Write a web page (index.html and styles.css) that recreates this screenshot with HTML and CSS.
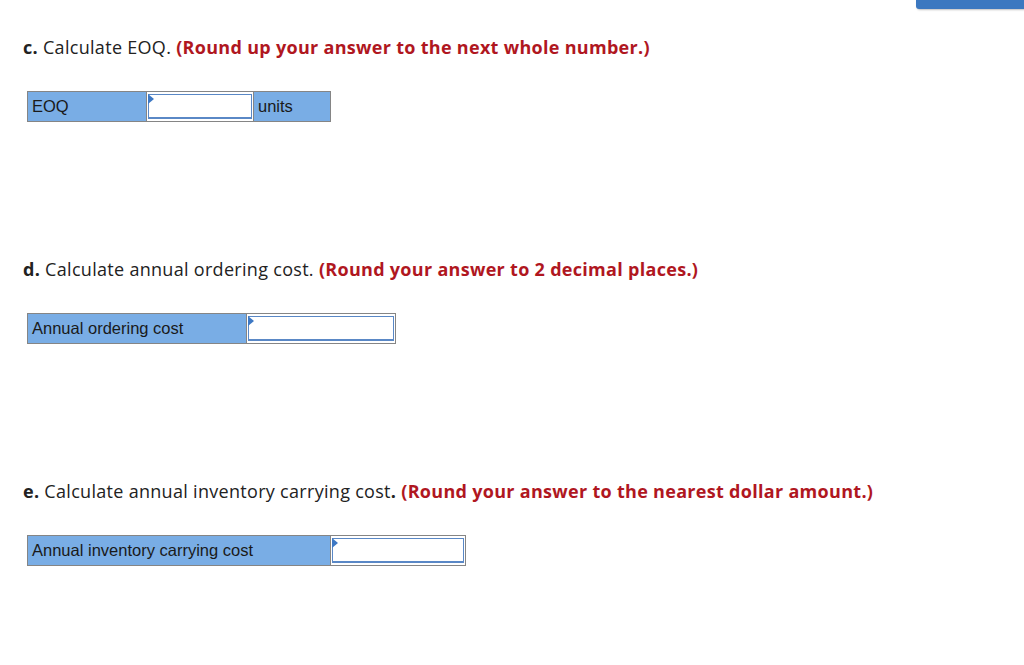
FILE: index.html
```html
<!DOCTYPE html>
<html>
<head>
<meta charset="utf-8">
<link rel="stylesheet" href="styles.css">
</head>
<body>
<div class="topbar"></div>
<main class="page">
  <section class="part">
    <p class="q"><b>c.</b> Calculate EOQ. <span class="hint">(Round up your answer to the next whole number.)</span></p>
    <table class="grid">
      <tr>
        <td class="lbl w119">EOQ</td>
        <td class="inp w104"><div class="box"></div></td>
        <td class="lbl w77">units</td>
      </tr>
    </table>
  </section>
  <section class="part">
    <p class="q"><b>d.</b> Calculate annual ordering cost. <span class="hint">(Round your answer to 2 decimal places.)</span></p>
    <table class="grid">
      <tr>
        <td class="lbl w219">Annual ordering cost</td>
        <td class="inp w146"><div class="box"></div></td>
      </tr>
    </table>
  </section>
  <section class="part">
    <p class="q"><b>e.</b> Calculate annual inventory carrying cost<b>.</b> <span class="hint">(Round your answer to the nearest dollar amount.)</span></p>
    <table class="grid">
      <tr>
        <td class="lbl w303">Annual inventory carrying cost</td>
        <td class="inp w132"><div class="box"></div></td>
      </tr>
    </table>
  </section>
</main>
</body>
</html>
```

FILE: styles.css
```css
html, body {
  margin: 0;
  padding: 0;
  background: #fff;
}
.topbar {
  position: absolute;
  top: 0;
  right: 0;
  width: 108px;
  height: 9px;
  background: #3b78c0;
  border-bottom-left-radius: 3px;
  box-shadow: 1px 1px 2px rgba(0,0,0,0.25);
}
.page {
  padding: 36px 0 0 23px;
}
.part {
  height: 222px;
}
.part:last-child {
  height: auto;
}
.q {
  margin: 0;
  font-family: "Open Sans", "Noto Sans", sans-serif;
  font-size: 18px;
  line-height: 22px;
  color: #222;
  letter-spacing: 0.3px;
}
.q b {
  font-weight: 700;
}
.hint {
  color: #b0171f;
  font-weight: 700;
}
.grid {
  margin: 33px 0 0 4px;
  border-collapse: collapse;
  font-family: "Liberation Sans", Arial, sans-serif;
  font-size: 16.5px;
  color: #1a1a1a;
}
.grid td {
  border: 1px solid #858585;
  height: 27px;
  padding: 0;
}
.lbl {
  background: #79ade5;
  padding: 0 0 0 4px !important;
  box-sizing: border-box;
}
.inp {
  background: #fff;
  padding: 1px !important;
}
.box {
  height: 22px;
  border: 1px solid #5a88c6;
  border-bottom-width: 2px;
  background: #fff;
  position: relative;
}
.box::before {
  content: "";
  position: absolute;
  left: -1px;
  top: -1px;
  border-left: 6px solid #3d78c4;
  border-top: 5px solid transparent;
  border-bottom: 5px solid transparent;
}
.w119 { width: 119px; }
.w104 { width: 104px; }
.w77 { width: 77px; }
.w219 { width: 219px; }
.w146 { width: 146px; }
.w303 { width: 303px; }
.w132 { width: 132px; }
```
